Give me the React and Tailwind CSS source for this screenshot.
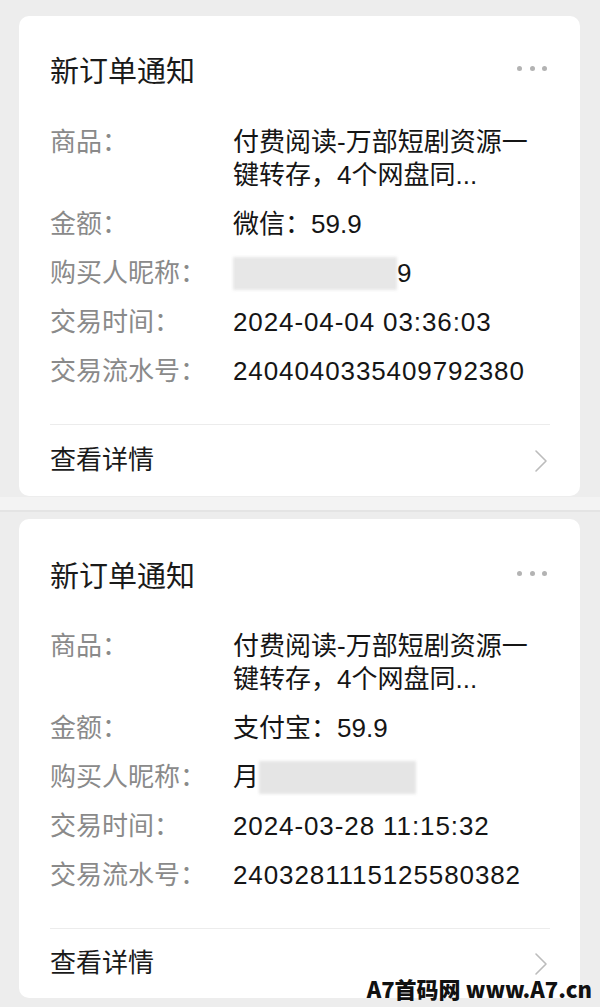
import React from "react";

const FONT = { fontFamily: '"Liberation Sans", "Noto Sans CJK SC", sans-serif' };

function Row({ label, children, num }) {
  return (
    <div className="flex text-[26px] leading-[33px]">
      <div className="w-[183px] shrink-0 text-[#8a8a8a]">{label}</div>
      <div className={num ? "flex-1 text-[#151515] tracking-[0.9px]" : "flex-1 text-[#151515]"}>{children}</div>
    </div>
  );
}

function Card({ pay, buyer, time, serial, second }) {
  return (
    <div className={second ? "ml-[19px] w-[561px] h-[479px] bg-white rounded-[10px] flex flex-col" : "ml-[19px] w-[561px] h-[480px] bg-white rounded-[10px] flex flex-col"}>
      <div className={second ? "flex items-center justify-between pl-[31px] pr-[33px] pt-[40px]" : "flex items-center justify-between pl-[31px] pr-[33px] pt-[38px]"}>
        <div className="text-[29px] leading-[36px] text-[#1a1a1a]">新订单通知</div>
        <div className="flex gap-[7.5px] mb-[8px]">
          <span className="w-[5px] h-[5px] rounded-full bg-[#b3b3b3]" />
          <span className="w-[5px] h-[5px] rounded-full bg-[#b3b3b3]" />
          <span className="w-[5px] h-[5px] rounded-full bg-[#b3b3b3]" />
        </div>
      </div>
      <div className={second ? "pl-[31px] mt-[35px] flex flex-col gap-[16px]" : "pl-[31px] mt-[36px] flex flex-col gap-[16px]"}>
        <Row label="商品：">
          <div className="w-[300px]">付费阅读-万部短剧资源一键转存，4个网盘同...</div>
        </Row>
        <Row label="金额：">{pay}</Row>
        <Row label="购买人昵称：">{buyer}</Row>
        <Row label="交易时间：" num>{time}</Row>
        <Row label="交易流水号：" num>{serial}</Row>
      </div>
      <div className="mt-[36px] ml-[31px] mr-[30px] h-px bg-[#ececec]" />
      <div className="flex-1 flex items-center justify-between pl-[31px] pr-[32px]">
        <div className="text-[26px] leading-[33px] text-[#1a1a1a]">查看详情</div>
        <svg width="14" height="24" viewBox="0 0 14 24" fill="none">
          <path d="M2 2 L12 12 L2 22" stroke="#bcbcbc" strokeWidth="1.6" strokeLinecap="round" strokeLinejoin="round" />
        </svg>
      </div>
    </div>
  );
}

export default function App() {
  return (
    <div className="relative w-[600px] min-h-[1007px] bg-[#ededed] pt-[16px] overflow-hidden" style={FONT}>
      <Card
        pay="微信：59.9"
        buyer={
          <div className="flex items-center h-[33px]">
            <div className="w-[164px] h-[33px] bg-[#e7e7e7] blur-[1.5px]" />
            <span>9</span>
          </div>
        }
        time="2024-04-04 03:36:03"
        serial="2404040335409792380"
      />
      <div className="h-[23px] flex flex-col">
        <div className="h-[13px] mt-[1px] bg-[#f3f3f3]" />
        <div className="h-[2px] bg-[#e4e4e4]" />
      </div>
      <Card
        second
        pay="支付宝：59.9"
        buyer={
          <div className="flex items-center h-[33px]">
            <span>月</span>
            <div className="w-[157px] h-[33px] bg-[#e5e5e5] blur-[1.5px]" />
          </div>
        }
        time="2024-03-28 11:15:32"
        serial="2403281115125580382"
      />
      <div
        className="absolute right-[8px] top-[975px] text-[22px] leading-[26px] font-black text-[#111] whitespace-nowrap"
        style={{ fontFamily: '"Noto Sans CJK SC", sans-serif' }}
      >
        A7首码网 www.A7.cn
      </div>
    </div>
  );
}
